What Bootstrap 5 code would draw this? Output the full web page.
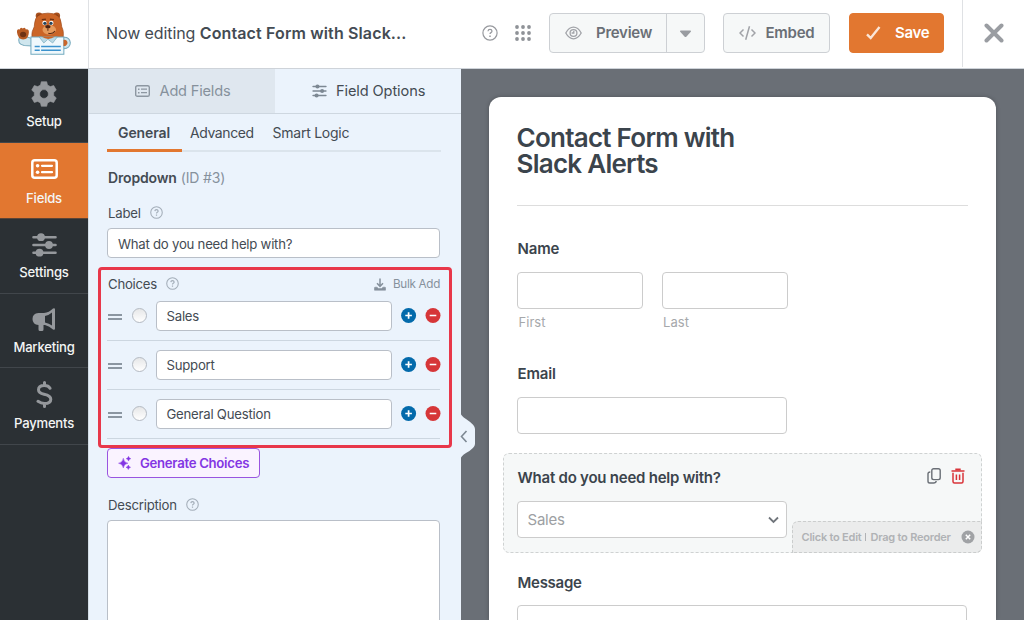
<!DOCTYPE html>
<html lang="en">
<head>
<meta charset="utf-8">
<title>Form Builder</title>
<meta name="viewport" content="width=device-width, initial-scale=1">
<link href="https://cdn.jsdelivr.net/npm/bootstrap@5.3.0/dist/css/bootstrap.min.css" rel="stylesheet">
<style>
body{font-family:Inter,"Liberation Sans",sans-serif;color:#444b53;height:620px;overflow:hidden;font-size:13.2px;line-height:20px;letter-spacing:-.24px;background:#fff}
svg{display:block;flex:none}

/* top bar */
.topbar{height:69px;border-bottom:1px solid #ced3d9}
.logo-cell{width:89px;border-right:1px solid #dfe1e4;padding:10px 0 0 16px}
.doc-title{font-size:16px;margin-left:17px;padding-bottom:2px;width:383px;white-space:nowrap;letter-spacing:-.1px}
.doc-title b{letter-spacing:.13px;font-weight:600;margin-left:4.5px}
.fw-sb{font-weight:600}
.tools{padding-bottom:2px}
.tool-help{margin-left:-7.5px}
.tool-grid{margin-right:18px}
.tool-btn{height:40px;border:1px solid #cdd0d4;border-radius:4px;background:#f6f8f8;color:#6a6f76;font-weight:600;font-size:15px;letter-spacing:-.26px}
.tool-preview{width:156px}
.tool-preview .main-part{width:117px;border-right:1px solid #cdd0d4;padding-left:15px;gap:14px}
.tool-preview .caret{margin:16px 0 0 12px}
.tool-embed{width:107px;margin-left:18px;padding-left:14.5px;gap:10px}
.tool-save{width:95px;margin-left:19px;padding-left:16px;gap:14px;background:#e27730;border-color:#e27730;color:#fff}
.tool-close{margin-left:18px;width:62px;height:68px;border-left:1px solid #dfe1e4;padding-left:21px}

/* left navigation */
.workarea{height:551px;overflow:hidden}
.rail{width:88px;background:#2b3034;font-weight:500;font-size:13.1px;letter-spacing:-.22px;flex:none}
.rail-item{border-bottom:1px solid #41464b;color:#95989c}
.rail-item span{color:#f4f5f5;line-height:18px}
.rail-item.active{background:#e27730;color:#fff;border-color:#5c4436;height:76px;padding-top:16px}
.rail-item.active span{margin-top:10px}
.r-setup{height:74px;padding-top:12px}.r-setup span{margin-top:5px}
.r-settings{height:75px;padding-top:14px}.r-settings span{margin-top:6px}
.r-marketing{height:74px;padding-top:13px}.r-marketing span{margin-top:6px}
.r-payments{height:77px;padding-top:13px}.r-payments span{margin-top:6px}

/* options panel */
.side-panel{width:373px;background:#ebf3fc;border-left:1px solid #d3dde6;flex:none;overflow:hidden}
.ptab{height:45px;border-bottom:1px solid #ced7e0;font-size:14.6px;letter-spacing:-.11px;padding:0 0 0 37px;gap:9px}
.ptab-off{width:186px;background:#dfe7ef;color:#86919c;padding-left:46px;gap:9.5px;letter-spacing:-.19px}
.pbody{padding:0 21px 0 18px}
.subtabs{height:38px;border-bottom:2px solid #dbe4ec;font-size:14px;line-height:37px;margin-right:-1px}
.subtabs .on{width:75px;height:38px;border-bottom:3px solid #e27730;padding-left:11px;font-weight:600;letter-spacing:-.1px}
.st-adv{margin-left:8px;width:64px;letter-spacing:-.42px}
.st-logic{margin-left:18.5px}
.field-head{margin-top:16px;padding-left:1px;font-size:14px;letter-spacing:-.15px}
.field-head .fid{color:#86919c;margin-left:4px}
.plabel{padding-left:1px;height:20px}
.plabel .q{margin:-2px 0 0 9px}
.mt-label{margin-top:15px}.mt-desc{margin-top:17px}
.inp{height:30px;border:1px solid #b9bfc8;border-radius:4px;background:#fff;line-height:30px;padding-left:10px;margin-top:5px}
.inp-area{height:110px}
.choice-box{border:3px solid #e8374a;border-radius:4px;margin:9px -12px 0 -9px;height:181px;padding:4px 9px 0 6px}
.bulk{color:#86919c;font-size:11.7px;letter-spacing:-.3px;margin-left:7px}
.choice{height:49.4px;border-bottom:1px solid #ccd6e0;padding-top:9.5px}
.choice:nth-child(2){height:46.5px;padding-top:6.5px}
.choice .grip{margin:11px 16px 0 0}
.choice .inp{width:236px;line-height:29px;margin-top:0;padding-left:9.5px;flex:none}
.choice .pm{margin:7px 0 0 9px}
.radio{width:15px;height:15px;border:1px solid #b4bac2;border-radius:50%;background:linear-gradient(#e6e7e8,#fff);margin:7px 9px 0 -7px;flex:none}
.gen{height:30px;width:153px;border:1px solid #9a55e0;border-radius:4px;background:#faf3ff;color:#8336e3;font-weight:600;font-size:13.2px;letter-spacing:-.3px;padding-left:10px;gap:9px}

/* form preview */
.canvas{background:#6a6f76;padding:28px 28px 0 28px}
.sheet{background:#fff;border-radius:12px 12px 0 0;height:523px;padding:28px 28.5px 0 27.5px;box-shadow:0 0 4px rgba(0,0,0,.25);color:#3b444c}
.sheet h1{font-size:26px;line-height:26px;font-weight:600;margin:0;letter-spacing:-.74px}
.rule{margin-top:28px;border-top:1px solid #ddd}
.lbl{font-weight:600;font-size:15px;line-height:20px;padding-left:1px;letter-spacing:-.15px}
.lbl-name{margin-top:33px}.lbl-email{margin-top:32px}.lbl-msg{margin-top:20px;letter-spacing:-.28px}
.box{height:37.5px;border:1px solid #ccc;border-radius:4px;background:#fff;margin-left:.5px}
.box-half{width:126px}.box-mid{width:270px}.box-wide{width:450px}
.gap-box{margin-top:12.5px}
.lbl-msg+.gap-box{margin-top:12px}
.names{gap:18px}
.hint{color:#a6a8ab;font-size:13px;letter-spacing:.04px;margin:3px 0 0 2px}
.picked{margin:19px -14px 0 -14px;height:100px;border:1px dashed #cfd2d2;border-radius:6px;background:#f6f8f8;padding:14px 0 0 13px;position:relative}
.picked .lbl{letter-spacing:-.23px}
.picked .copy{margin-right:9px}.picked .trash{margin-right:16px}
.sel{padding:1px 7px 0 9.5px;color:#9d9fa3;font-size:15px}
.reorder{position:absolute;right:-1px;bottom:-1px;width:190px;height:32px;background:#ebecec;border:1px dashed #cbcdcd;border-radius:6px 0 6px 0;color:#b0b2b5;font-size:11px;letter-spacing:-.22px;font-weight:600;padding-left:9px}
.reorder i{width:1px;height:8px;background:#b0b2b5;margin:0 4px}
.reorder svg{margin-left:10px}
.handle{position:absolute;left:460px;top:343px}
</style>
</head>
<body>
<header class="topbar d-flex">
  <div class="logo-cell flex-shrink-0">
    <svg width="56" height="46" viewBox="50 32 165 135">
      <path d="M60 112q-8 20 14 24l22 2v-22l-16-6z" fill="#cfe6ee" stroke="#78aabd" stroke-width="3"/>
      <path d="M188 112q20-2 22 16 0 16-20 18z" fill="#cfe6ee" stroke="#78aabd" stroke-width="3"/>
      <circle cx="118" cy="49" r="10" fill="#a8501d"/><circle cx="170" cy="49" r="10" fill="#a8501d"/>
      <circle cx="118" cy="50" r="5" fill="#6f3213"/><circle cx="170" cy="50" r="5" fill="#6f3213"/>
      <path d="M105 70q2-29 39-29t39 29q1 12 5 20 3 8 0 32H98q-3-24 2-32 5-8 5-20z" fill="#cb6527" stroke="#9c4717" stroke-width="2"/>
      <path d="M53 98q-1-12 8-9 2-8 9-3 7-5 9 3 9-2 9 8-1 21-17 22-15-1-18-21z" fill="#b75a22"/>
      <ellipse cx="71" cy="104" rx="9" ry="8" fill="#6f3213"/>
      <ellipse cx="148" cy="90" rx="20" ry="14" fill="#e69a5c"/>
      <circle cx="134" cy="70" r="6.500" fill="#fff"/><circle cx="154" cy="70" r="6.500" fill="#fff"/>
      <circle cx="135" cy="71" r="4.800" fill="#23445c"/><circle cx="153" cy="71" r="4.800" fill="#23445c"/>
      <path d="M126 60l12-1M150 59l12 1" stroke="#6f3213" stroke-width="4"/>
      <ellipse cx="144" cy="81" rx="8" ry="5" fill="#4c2412"/>
      <path d="M144 86v7M145 100q12 4 20-6" stroke="#5b2a12" stroke-width="3" fill="none"/>
      <path d="M94 111h97v51H94z" fill="#eff8fc" stroke="#73aabf" stroke-width="3"/>
      <path d="M118 111l14 18 12-11 14 11 14-18z" fill="#bad9e5" stroke="#78aabd" stroke-width="2"/>
      <path d="M125 110q20 14 40 0z" fill="#cb6527"/>
      <path d="M190 120q10-2 12 9-3 10-12 9z" fill="#c9662a"/>
      <path d="M105 139h15M124 139h58M105 150h15M124 150h58" stroke="#3b92cd" stroke-width="4.500"/>
    </svg>
  </div>
  <div class="doc-title d-flex align-items-center"><span>Now editing</span><b>Contact Form with Slack...</b></div>
  <div class="tools d-flex align-items-center flex-grow-1">
    <svg class="tool-help me-auto" width="16" height="16" viewBox="0 0 16 16" fill="none" stroke="#97999e" stroke-width="1.200"><circle cx="8" cy="8" r="7.100"/><path d="M6 6.300q.1-1.900 2-1.900t2 1.700q0 1-1 1.500t-1 1.500"/><path d="M8 10.500v1.400" stroke-width="1.500"/></svg>
    <svg class="tool-grid" width="16" height="16" fill="#8f9297"><g id="dots"><circle cx="2" cy="2" r="1.900"/><circle cx="8" cy="2" r="1.900"/><circle cx="14" cy="2" r="1.900"/></g><use href="#dots" y="6"/><use href="#dots" y="12"/></svg>
    <div class="tool-btn tool-preview d-flex">
      <div class="main-part d-flex align-items-center">
        <svg width="17" height="14" viewBox="0 0 17 14" fill="none" stroke="#a1a3a8" stroke-width="1.300"><path d="M.8 7Q4 1.200 8.500 1.200T16.200 7Q13 12.800 8.500 12.800T.8 7z"/><circle cx="8.500" cy="7" r="3.400"/><path d="M8.800 4.800V7H6.600"/></svg>
        <span>Preview</span>
      </div>
      <svg class="caret" width="13" height="8" fill="#999ca1"><path d="M1.600.5h9.800q1 .3.400 1.200L7.300 6.700q-.8.700-1.600 0L1.200 1.700Q.6.800 1.600.500z"/></svg>
    </div>
    <div class="tool-btn tool-embed d-flex align-items-center">
      <svg width="17" height="16" viewBox="0 0 17 16" fill="none" stroke="#a1a3a8" stroke-width="1.500"><path d="M4.500 4.500L1 8l3.500 3.500M12.500 4.500L16 8l-3.500 3.500M10.500 1.200L6.700 14.800"/></svg>
      <span>Embed</span>
    </div>
    <div class="tool-btn tool-save d-flex align-items-center">
      <svg width="15" height="14" fill="none" stroke="#fbe6d8" stroke-width="2.400"><path d="M1 8.300L4.700 12 13.500 1"/></svg>
      <span>Save</span>
    </div>
    <div class="tool-close d-flex align-items-center">
      <svg width="20" height="20" stroke="#9a9da2" stroke-width="4" stroke-linecap="round"><path d="M2.500 2.500l15 15M17.500 2.500l-15 15"/></svg>
    </div>
  </div>
</header>
<main class="workarea d-flex position-relative">
  <nav class="rail d-flex flex-column">
    <div class="rail-item r-setup d-flex flex-column align-items-center">
      <svg width="26" height="26" viewBox="-13 -13 26 26" fill="currentColor" stroke="currentColor" stroke-width=".6" stroke-linejoin="round"><path fill-rule="evenodd" d="M-2.700-12.300h5.400l.8 3.300 2.800 1.600 3.400-1.100 2.600 4.600-2.600 2.300v3.200l2.600 2.300-2.600 4.600-3.400-1.100-2.800 1.600-.8 3.300h-5.400l-.8-3.300-2.800-1.600-3.400 1.100-2.600-4.600 2.600-2.300v-3.200l-2.600-2.300 2.600-4.600 3.400 1.100 2.800-1.600zM0-4.400a4.400 4.400 0 1 0 0 8.800a4.400 4.400 0 1 0 0-8.800z"/></svg>
      <span>Setup</span>
    </div>
    <div class="rail-item active d-flex flex-column align-items-center">
      <svg width="27" height="20" viewBox="0 0 27 20" fill="none" stroke="currentColor"><rect x="1.300" y="1.300" width="24.400" height="17.400" rx="2.500" stroke-width="2.500"/><path d="M11 6.800h10M11 13.200h10" stroke-width="2.200" stroke-linecap="round"/><g fill="currentColor" stroke="none"><circle cx="6.600" cy="6.800" r="1.800"/><circle cx="6.600" cy="13.200" r="1.800"/></g></svg>
      <span>Fields</span>
    </div>
    <div class="rail-item r-settings d-flex flex-column align-items-center">
      <svg width="25" height="24" viewBox="0 0 25 24" stroke="currentColor" fill="currentColor" stroke-width="2.600" stroke-linecap="round"><path d="M1.500 4.200h22M1.500 12h22M1.500 19.700h22"/><g stroke="none"><circle cx="9" cy="4.200" r="3.900"/><circle cx="17" cy="12" r="3.900"/><circle cx="7.500" cy="19.700" r="3.900"/></g></svg>
      <span>Settings</span>
    </div>
    <div class="rail-item r-marketing d-flex flex-column align-items-center">
      <svg width="24" height="25" viewBox="0 0 24 25" fill="currentColor"><path fill-rule="evenodd" d="M6.500 6H12Q17 5.500 21 1.500q1.800-1 2 .8v19.400q-.2 1.800-2 .8-3.500-3.500-8-4.500h-1.500v4.500q0 1.500-1.500 1.500H8q-1.500 0-1.500-1.500V18Q.500 17.500.500 12T6.500 6zM13 9v6.400q4 .8 7 3V5.500Q17 8.200 13 9z"/></svg>
      <span>Marketing</span>
    </div>
    <div class="rail-item r-payments d-flex flex-column align-items-center">
      <svg width="17" height="27" viewBox="0 0 17 27" fill="none" stroke="currentColor" stroke-width="3" stroke-linecap="round"><path d="M8.500 1.500v3M8.500 22.500v3M14 7.300Q12.500 4.600 8.300 4.600q-5.800 0-5.800 4.200 0 3.300 5.500 4.400 6.800 1.300 6.800 5 0 4.300-6.300 4.300-3.500 0-6.500-2.200"/></svg>
      <span>Payments</span>
    </div>
  </nav>
  <section class="side-panel">
    <div class="d-flex">
      <div class="ptab ptab-off d-flex align-items-center">
        <svg width="15" height="12" viewBox="0 0 15 12" fill="none" stroke="#8d97a1"><rect x=".7" y=".7" width="13.600" height="10.600" rx="1.600" stroke-width="1.400"/><path d="M6 4.200h6M6 7.700h6" stroke-width="1.200"/><path d="M3 4.200h1.500M3 7.700h1.500" stroke-width="1.400"/></svg>
        <span>Add Fields</span>
      </div>
      <div class="ptab flex-grow-1 d-flex align-items-center">
        <svg width="15" height="14" viewBox="0 0 25 24" stroke="#7d8893" fill="#7d8893" stroke-width="2.600" stroke-linecap="round"><path d="M1.500 4.200h22M1.500 12h22M1.500 19.700h22"/><g stroke="none"><circle cx="9" cy="4.200" r="3.500"/><circle cx="17" cy="12" r="3.500"/><circle cx="7.500" cy="19.700" r="3.500"/></g></svg>
        <span>Field Options</span>
      </div>
    </div>
    <div class="pbody">
      <div class="subtabs d-flex"><div class="on">General</div><span class="st-adv">Advanced</span><span class="st-logic">Smart Logic</span></div>
      <div class="field-head"><span class="fw-sb">Dropdown</span><span class="fid">(ID #3)</span></div>
      <div class="plabel mt-label d-flex align-items-center"><span>Label</span><svg class="q" width="13" height="13" viewBox="0 0 16 16" fill="none" stroke="#a3adb8" stroke-width="1.300"><g id="help"><circle cx="8" cy="8" r="7.100"/><path d="M6 6.300q.1-1.900 2-1.900t2 1.700q0 1-1 1.500t-1 1.500M8 10.500v1.400" stroke-width="1.500"/></g></svg></div>
      <div class="inp">What do you need help with?</div>
      <div class="choice-box">
        <div class="plabel d-flex align-items-center"><span>Choices</span><svg class="q" width="13" height="13" viewBox="0 0 16 16" fill="none" stroke="#a3adb8" stroke-width="1.300"><use href="#help"/></svg>
          <svg class="ms-auto" width="12" height="13" viewBox="0 0 12 13" fill="none" stroke="#86919c"><path d="M6 .5v7.500M3 5.200L6 8.300l3-3.100" stroke-width="1.500"/><path d="M1 9.200q-.5 0-.5.600v2.400h11V9.800q0-.6-.5-.6H9L7.500 10.600h-3L3 9.200z" fill="#86919c" stroke-width=".6"/></svg><span class="bulk">Bulk Add</span></div>
        <div class="choice d-flex"><svg class="grip" width="16" height="10" stroke="#8b96a1" stroke-width="1.800"><path d="M1 3h14M1 7h14"/></svg><i class="radio"></i><div class="inp">Sales</div><svg class="pm" width="40" height="16"><g id="pm"><circle cx="7.600" cy="7.500" r="7.500" fill="#036aab"/><circle cx="32" cy="7.500" r="7.500" fill="#d63638"/><path d="M4.300 7.500h6.600M7.600 4.200v6.600M28.700 7.500h6.600" stroke="#fff" stroke-width="1.700"/></g></svg></div>
        <div class="choice d-flex"><svg class="grip" width="16" height="10" stroke="#8b96a1" stroke-width="1.800"><path d="M1 3h14M1 7h14"/></svg><i class="radio"></i><div class="inp">Support</div><svg class="pm" width="40" height="16"><use href="#pm"/></svg></div>
        <div class="choice d-flex"><svg class="grip" width="16" height="10" stroke="#8b96a1" stroke-width="1.800"><path d="M1 3h14M1 7h14"/></svg><i class="radio"></i><div class="inp">General Question</div><svg class="pm" width="40" height="16"><use href="#pm"/></svg></div>
      </div>
      <div class="gen d-flex align-items-center"><svg width="13" height="14" fill="#8336e3"><path d="M5.300 2.200Q5.900 6.600 10 7.200 5.900 7.800 5.300 12 4.700 7.800.500 7.200 4.700 6.600 5.300 2.200zM10.500.3q.3 2 2.300 2.400-2 .4-2.300 2.400-.3-2-2.300-2.400 2-.4 2.300-2.400zM10.300 9q.3 2 2.300 2.300-2 .3-2.300 2.300-.3-2-2.300-2.300 2-.3 2.300-2.300z" stroke="#8336e3" stroke-width=".4"/></svg><span>Generate Choices</span></div>
      <div class="plabel mt-desc d-flex align-items-center"><span>Description</span><svg class="q" width="13" height="13" viewBox="0 0 16 16" fill="none" stroke="#a3adb8" stroke-width="1.300"><use href="#help"/></svg></div>
      <div class="inp inp-area"></div>
    </div>
  </section>
  <section class="canvas flex-grow-1">
    <div class="sheet">
      <h1>Contact Form with<br>Slack Alerts</h1>
      <div class="rule"></div>
      <div class="lbl lbl-name">Name</div>
      <div class="names gap-box d-flex">
        <div><div class="box box-half"></div><div class="hint">First</div></div>
        <div><div class="box box-half"></div><div class="hint">Last</div></div>
      </div>
      <div class="lbl lbl-email">Email</div>
      <div class="box box-mid gap-box"></div>
      <div class="picked">
        <div class="d-flex"><div class="lbl">What do you need help with?</div>
          <svg class="copy ms-auto" width="15" height="16" fill="none" stroke="#6a6f76" stroke-width="1.400"><rect x="4.800" y=".8" width="8.400" height="10.800" rx="1.800"/><path d="M3.300 4Q1 4 1 5.800V13.200Q1 15 2.800 15H6.500Q9 15 9.200 13"/></svg>
          <svg class="trash" width="14" height="16" fill="none" stroke="#d9343a" stroke-width="1.500"><path d="M.5 3h13M2 4.800v8.700q0 1.500 1.500 1.500h7q1.500 0 1.500-1.500V4.800M5.400 6.500v5.500M8.600 6.500v5.500"/><path d="M4.300 1.500h5.400" stroke-width="2"/></svg></div>
        <div class="box box-mid gap-box sel d-flex align-items-center"><span>Sales</span><svg class="ms-auto" width="11" height="8" fill="none" stroke="#70757b" stroke-width="1.800"><path d="M1 1.500l4.500 4.500L10 1.500"/></svg></div>
        <div class="reorder d-flex align-items-center"><span>Click to Edit</span><i></i><span>Drag to Reorder</span><svg width="14" height="14"><circle cx="7" cy="7" r="6.500" fill="#a0a2a5"/><path d="M4.800 4.800l4.400 4.400M9.200 4.800L4.800 9.200" stroke="#fff" stroke-width="1.500"/></svg></div>
      </div>
      <div class="lbl lbl-msg">Message</div>
      <div class="box box-wide gap-box"></div>
    </div>
  </section>
  <svg class="handle" width="16" height="48"><path d="M0 0Q1 4 6 7q9 6 9 10V32q0 4-9 9-5 3-6 7z" fill="#ebf3fc"/><path d="M6.500 19L1.500 24.500l5 5.500" fill="none" stroke="#7d8893" stroke-width="1.600"/></svg>
</main>
<script src="https://cdn.jsdelivr.net/npm/bootstrap@5.3.0/dist/js/bootstrap.bundle.min.js"></script>
</body>
</html>
